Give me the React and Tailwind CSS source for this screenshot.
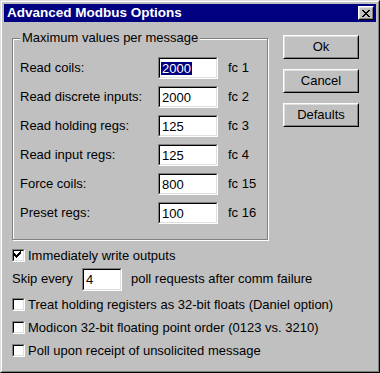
const LIMITS = [
  { label: 'Read coils:', value: '2000', fc: 'fc 1', selected: true },
  { label: 'Read discrete inputs:', value: '2000', fc: 'fc 2' },
  { label: 'Read holding regs:', value: '125', fc: 'fc 3' },
  { label: 'Read input regs:', value: '125', fc: 'fc 4' },
  { label: 'Force coils:', value: '800', fc: 'fc 15' },
  { label: 'Preset regs:', value: '100', fc: 'fc 16' },
]

const OPTIONS = [
  'Treat holding registers as 32-bit floats (Daniel option)',
  'Modicon 32-bit floating point order (0123 vs. 3210)',
  'Poll upon receipt of unsolicited message',
]

function Sunken({ className = '', children }) {
  return (
    <div className={`shrink-0 border border-t-[#808080] border-l-[#808080] border-b-white border-r-white ${className}`}>
      <div className="h-full w-full border border-t-black border-l-black border-b-[#dfdfdf] border-r-[#dfdfdf] bg-white">
        {children}
      </div>
    </div>
  )
}

function Field({ value, selected, className = '' }) {
  return (
    <Sunken className={className}>
      <div className="flex h-full items-center pl-[1px] text-[13px] leading-none">
        <span className={selected ? 'bg-[#000080] px-px text-white' : 'px-px'}>{value}</span>
      </div>
    </Sunken>
  )
}

function Check({ checked, label }) {
  return (
    <div className="flex h-[23px] items-center gap-[3px] whitespace-nowrap">
      <Sunken className="h-[13px] w-[13px]">
        {checked ? (
          <svg width="9" height="9" viewBox="0 0 9 9" className="-ml-px -mt-px">
            <path d="M1 3h1v1h1v1h1v-1h1v-1h1v-1h1v-1h1v3h-1v1h-1v1h-1v1h-1v1h-1v-1h-1v-1h-1v-1h-1z" fill="#000" />
          </svg>
        ) : null}
      </Sunken>
      <span className="text-[13px]">{label}</span>
    </div>
  )
}

function Button({ children }) {
  return (
    <div className="border border-t-white border-l-white border-b-black border-r-black">
      <div className="flex h-[22px] w-[74px] items-center justify-center border border-t-[#dfdfdf] border-l-[#dfdfdf] border-b-[#808080] border-r-[#808080] text-[13px]">
        {children}
      </div>
    </div>
  )
}

export default function App() {
  return (
    <div
      className="h-[373px] w-[380px] bg-[#c0c0c0] text-black"
      style={{ fontFamily: '"Liberation Sans", Arial, sans-serif' }}
    >
      <div className="h-full w-full border border-t-[#dfdfdf] border-l-[#dfdfdf] border-b-black border-r-black">
        <div className="h-full w-full border border-t-white border-l-white border-b-[#808080] border-r-[#808080] p-[2px]">
          <div className="flex h-[18px] items-center justify-between bg-[#000080] pl-[3px] pr-[2px]">
            <span className="text-[13.5px] font-bold text-white">Advanced Modbus Options</span>
            <div className="border border-t-white border-l-white border-b-black border-r-black">
              <div className="flex h-[12px] w-[14px] items-center justify-center border border-t-[#dfdfdf] border-l-[#dfdfdf] border-b-[#808080] border-r-[#808080] bg-[#c0c0c0]">
                <svg width="8" height="7" viewBox="0 0 8 7">
                  <path d="M0 0h2v1h1v1h2v-1h1v-1h2v1h-1v1h-1v1h-1v1h1v1h1v1h1v1h-2v-1h-1v-1h-2v1h-1v1h-2v-1h1v-1h1v-1h1v-1h-1v-1h-1v-1h-1z" fill="#000" />
                </svg>
              </div>
            </div>
          </div>

          <div className="pl-[8px] pt-[9px]">
            <div className="flex">
              <div className="w-[256px] shrink-0">
                <div className="relative mt-[7px] h-[202px] border border-[#808080] shadow-[inset_1px_1px_0_#fff,1px_1px_0_#fff]">
                  <span className="absolute -top-[9px] left-[7px] bg-[#c0c0c0] px-[2px] text-[13px] leading-[16px]">
                    Maximum values per message
                  </span>
                  <div className="flex flex-col gap-[7px] pl-[7px] pt-[18px]">
                    {LIMITS.map((row) => (
                      <div key={row.label} className="flex h-[22px] items-center">
                        <span className="w-[138px] text-[13px]">{row.label}</span>
                        <Field value={row.value} selected={row.selected} className="h-[22px] w-[60px]" />
                        <span className="ml-[10px] text-[13px]">{row.fc}</span>
                      </div>
                    ))}
                  </div>
                </div>
              </div>

              <div className="ml-[15px] flex flex-col gap-[10px] pt-[4px]">
                <Button>Ok</Button>
                <Button>Cancel</Button>
                <Button>Defaults</Button>
              </div>
            </div>

            <div className="mt-[4px]">
              <Check checked label="Immediately write outputs" />
              <div className="flex h-[24px] items-center whitespace-nowrap">
                <span className="w-[70px] shrink-0 text-[13px]">Skip every</span>
                <Field value="4" className="h-[23px] w-[40px]" />
                <span className="ml-[9px] text-[13px]">poll requests after comm failure</span>
              </div>
              <div className="mt-[2px] flex flex-col">
                {OPTIONS.map((label) => (
                  <Check key={label} label={label} />
                ))}
              </div>
            </div>
          </div>
        </div>
      </div>
    </div>
  )
}
